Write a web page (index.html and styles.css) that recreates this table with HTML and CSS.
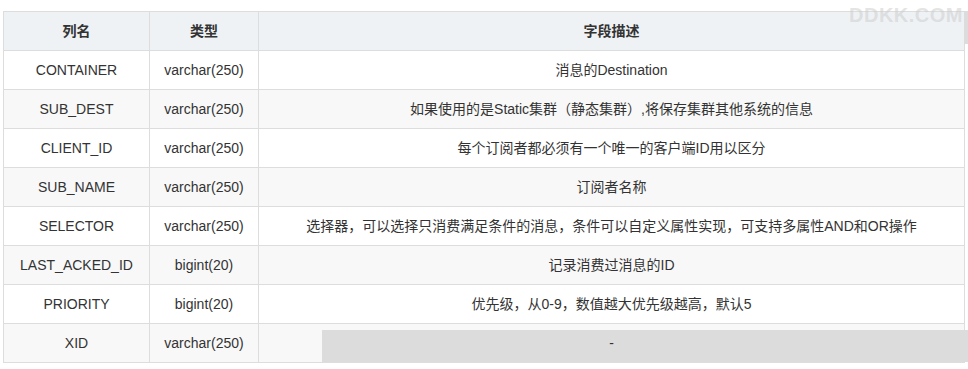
FILE: index.html
```html
<!DOCTYPE html>
<html lang="zh">
<head>
<meta charset="utf-8">
<link rel="stylesheet" href="styles.css">
</head>
<body>
<div class="page">
  <table class="fields">
    <colgroup>
      <col class="c1">
      <col class="c2">
      <col class="c3">
    </colgroup>
    <thead>
      <tr><th>列名</th><th>类型</th><th>字段描述</th></tr>
    </thead>
    <tbody>
      <tr><td>CONTAINER</td><td>varchar(250)</td><td>消息的Destination</td></tr>
      <tr><td>SUB_DEST</td><td>varchar(250)</td><td>如果使用的是Static集群（静态集群）,将保存集群其他系统的信息</td></tr>
      <tr><td>CLIENT_ID</td><td>varchar(250)</td><td>每个订阅者都必须有一个唯一的客户端ID用以区分</td></tr>
      <tr><td>SUB_NAME</td><td>varchar(250)</td><td>订阅者名称</td></tr>
      <tr><td>SELECTOR</td><td>varchar(250)</td><td>选择器，可以选择只消费满足条件的消息，条件可以自定义属性实现，可支持多属性AND和OR操作</td></tr>
      <tr><td>LAST_ACKED_ID</td><td>bigint(20)</td><td>记录消费过消息的ID</td></tr>
      <tr><td>PRIORITY</td><td>bigint(20)</td><td>优先级，从0-9，数值越大优先级越高，默认5</td></tr>
      <tr><td>XID</td><td>varchar(250)</td><td><span class="above">-</span></td></tr>
    </tbody>
  </table>
  <div class="watermark">DDKK.COM</div>
  <div class="edge"></div>
  <div class="shade"></div>
</div>
</body>
</html>
```

FILE: styles.css
```css
html, body {
  margin: 0;
  padding: 0;
  background: #fff;
}
.page {
  position: relative;
  width: 968px;
  height: 369px;
  padding: 11px 0 0 3px;
  box-sizing: border-box;
  overflow: hidden;
  font-family: "Liberation Sans", Arial, "Noto Sans CJK SC", sans-serif;
  font-size: 14px;
  color: #333;
}
.fields {
  border-collapse: collapse;
  table-layout: fixed;
  width: 961px;
}
.c1 { width: 146px; }
.c2 { width: 109px; }
.c3 { width: 706px; }
.fields th,
.fields td {
  border: 1px solid #dddddd;
  height: 39px;
  padding: 0 8px;
  box-sizing: border-box;
  text-align: center;
  vertical-align: middle;
  line-height: 20px;
  white-space: nowrap;
}
.fields th {
  background: #eff2f5;
  font-weight: bold;
}
.fields tbody tr:nth-child(odd) td { background: #ffffff; }
.fields tbody tr:nth-child(even) td { background: #f8f8f8; }
.above {
  position: relative;
  z-index: 2;
}
.watermark {
  position: absolute;
  z-index: 3;
  top: 4px;
  right: 5px;
  font-family: "Liberation Sans", Arial, sans-serif;
  font-weight: bold;
  font-size: 20px;
  letter-spacing: 0.5px;
  color: rgba(205, 205, 205, 0.55);
}
.edge {
  position: absolute;
  top: 11px;
  left: 964px;
  width: 4px;
  height: 33px;
  background: #dcdcdc;
}
.shade {
  position: absolute;
  z-index: 1;
  top: 330px;
  left: 322px;
  width: 646px;
  height: 32px;
  background: #dcdcdc;
}
```
